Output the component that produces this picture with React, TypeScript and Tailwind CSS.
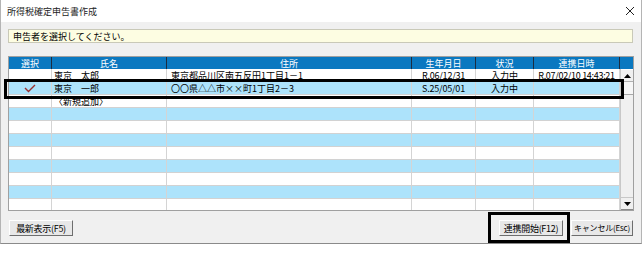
import React from 'react';

type Row = { name?: string; addr?: string; birth?: string; status?: string; dt?: string; sel?: boolean };

const rows: Row[] = [
  { name: '東京　太郎', addr: '東京都品川区南五反田1丁目1－1', birth: 'R.06/12/31', status: '入力中', dt: 'R.07/02/10 14:43:21' },
  { name: '東京　一郎', addr: '〇〇県△△市××町1丁目2－3', birth: 'S.25/05/01', status: '入力中', dt: '', sel: true },
  { name: '〈新規追加〉' },
  {}, {}, {}, {}, {}, {}, {}, {},
];

const headers = ['選択', '氏名', '住所', '生年月日', '状況', '連携日時'];

function Check() {
  return (
    <svg width="12" height="9" viewBox="0 0 12 9">
      <path d="M1 4 L4.5 7.5 L11 1" fill="none" stroke="#9a2f2f" strokeWidth="1.4" />
    </svg>
  );
}

function Btn({ label, w, extra }: { label: string; w: string; extra: string }) {
  return (
    <div
      className={`${w} ${extra} h-[16px] flex items-center justify-center whitespace-nowrap bg-[#e8e8e8] border-t border-l border-t-white border-l-white border-r border-b border-r-[#6e6e6e] border-b-[#6e6e6e] text-black leading-none`}
    >
      {label}
    </div>
  );
}

export default function App() {
  return (
    <div className="relative w-[643px] h-[256px] bg-white overflow-hidden font-['Noto_Sans_CJK_JP','Noto_Sans',sans-serif]">
      <div className="w-[642px] h-[244px] flex flex-col border-l border-r border-b border-l-[#b4b4b4] border-r-[#b4b4b4] border-b-[#8a8a8a]">
        {/* title bar */}
        <div className="h-[22px] bg-white flex items-center justify-between pl-[6px] pr-[5px]">
          <span className="text-[9px] text-[#222] leading-none">所得税確定申告書作成</span>
          <svg width="10" height="10" viewBox="0 0 10 10" className="mr-[1px]">
            <path d="M1 1 L9 9 M9 1 L1 9" stroke="#222" strokeWidth="1" />
          </svg>
        </div>
        {/* body */}
        <div className="flex-1 bg-[#f0f0f0] flex flex-col pt-[7px] pl-[7px] pr-[7px]">
          <div className="w-[625px] h-[14px] bg-[#fdfde2] border border-[#c9c9b8] flex items-center pl-[4px] text-[9px] text-black leading-none">
            申告者を選択してください。
          </div>
          <div className="mt-[13px] w-[626px] h-[155px] border border-[#a0a0a0] flex bg-white overflow-hidden">
            <div className="w-[611px] flex flex-col">
              <div className="grid grid-cols-[43px_115px_245px_64px_58px_86px] h-[12px] shrink-0 bg-[#0a78c0]">
                {headers.map((h) => (
                  <div key={h} className="border-r border-r-[#1b2c40] flex items-center justify-center text-[9px] text-white leading-none">
                    {h}
                  </div>
                ))}
              </div>
              {rows.map((r, i) => (
                <div
                  key={i}
                  className={`grid grid-cols-[43px_115px_245px_64px_58px_86px] h-[13px] shrink-0 border-b border-b-[#d2d2d2] text-[9px] text-black leading-none ${i % 2 === 1 ? 'bg-[#ade3fb]' : 'bg-white'}`}
                >
                  <div className="border-r border-r-[#d4d4d4] flex items-center justify-center">{r.sel ? <Check /> : null}</div>
                  <div className="border-r border-r-[#d4d4d4] flex items-center pl-[2px] whitespace-nowrap">{r.name}</div>
                  <div className="border-r border-r-[#d4d4d4] flex items-center pl-[4px] whitespace-nowrap">{r.addr}</div>
                  <div className="border-r border-r-[#d4d4d4] flex items-center justify-center whitespace-nowrap tracking-[-0.2px]">{r.birth}</div>
                  <div className="border-r border-r-[#d4d4d4] flex items-center justify-center whitespace-nowrap">{r.status}</div>
                  <div className="border-r border-r-[#d4d4d4] flex items-center justify-center whitespace-nowrap tracking-[-0.3px]">{r.dt}</div>
                </div>
              ))}
            </div>
            {/* scrollbar column */}
            <div className="w-[13px] flex flex-col">
              <div className="h-[12px] shrink-0 bg-[#0a78c0]" />
              <div className="flex-1 flex flex-col bg-[#f0f0f0] border-l border-l-[#c8c8c8]">
                <div className="h-[13px] shrink-0 flex items-center justify-center bg-[#f0f0f0] border-b border-b-[#b0b0b0] border-t border-t-white">
                  <svg width="7" height="4" viewBox="0 0 7 4"><path d="M0 4 L3.5 0 L7 4 Z" fill="#000" /></svg>
                </div>
                <div className="h-[13px] shrink-0 bg-[#f7f7f7] border-b border-b-[#a8a8a8]" />
                <div className="flex-1" />
                <div className="h-[13px] shrink-0 flex items-center justify-center bg-[#f0f0f0] border-t border-t-[#c8c8c8] border-b border-b-[#8a8a8a]">
                  <svg width="7" height="4" viewBox="0 0 7 4"><path d="M0 0 L3.5 4 L7 0 Z" fill="#000" /></svg>
                </div>
              </div>
            </div>
          </div>
          <div className="mt-[9px] flex justify-between pl-[1px] pr-[1px]">
            <Btn label="最新表示(F5)" w="w-[64px]" extra="text-[9px] tracking-[-0.3px]" />
            <div className="flex gap-[8px]">
              <Btn label="連携開始(F12)" w="w-[64px]" extra="text-[9px] tracking-[-0.3px]" />
              <Btn label="キャンセル(Esc)" w="w-[62px]" extra="text-[8px] tracking-[-0.2px]" />
            </div>
          </div>
        </div>
      </div>
      {/* highlight overlays */}
      <div className="absolute left-[4px] top-[79px] w-[620px] h-[20px] border-[3px] border-black pointer-events-none" />
      <div className="absolute left-[488px] top-[212px] w-[82px] h-[31px] border-[3px] border-black pointer-events-none" />
    </div>
  );
}
